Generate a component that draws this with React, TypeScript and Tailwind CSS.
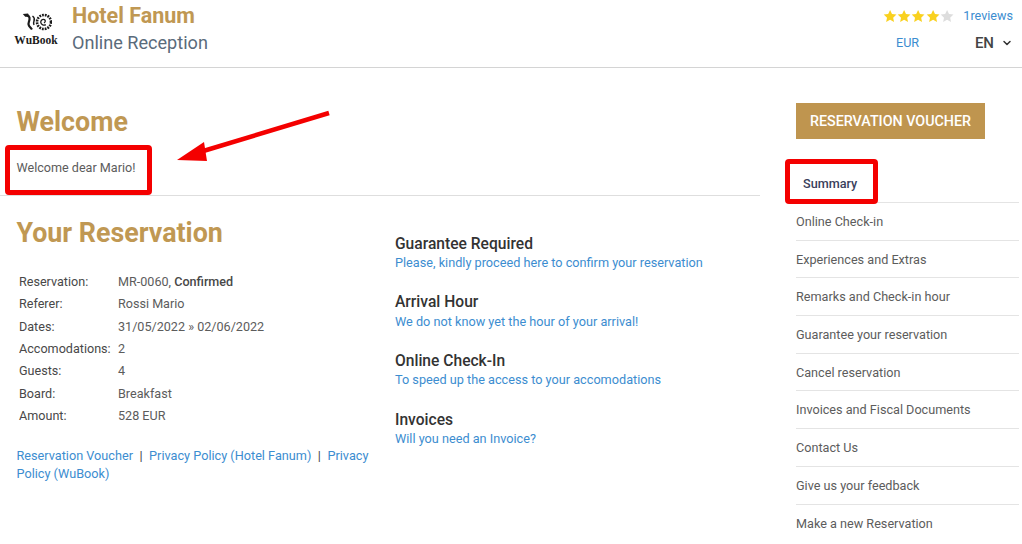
import { ChevronDown } from "lucide-react";

const details = [
  ["Reservation:", "MR-0060, "],
  ["Referer:", "Rossi Mario"],
  ["Dates:", "31/05/2022 » 02/06/2022"],
  ["Accomodations:", "2"],
  ["Guests:", "4"],
  ["Board:", "Breakfast"],
  ["Amount:", "528 EUR"],
];

const notices = [
  ["Guarantee Required", "Please, kindly proceed here to confirm your reservation"],
  ["Arrival Hour", "We do not know yet the hour of your arrival!"],
  ["Online Check-In", "To speed up the access to your accomodations"],
  ["Invoices", "Will you need an Invoice?"],
];

const menu = [
  "Online Check-in",
  "Experiences and Extras",
  "Remarks and Check-in hour",
  "Guarantee your reservation",
  "Cancel reservation",
  "Invoices and Fiscal Documents",
  "Contact Us",
  "Give us your feedback",
  "Make a new Reservation",
];

function Star({ color }: { color: string }) {
  return (
    <svg viewBox="0 0 24 24" className="w-[14.200px] h-[14.200px]" fill={color}>
      <path d="M12 1.500l3.200 7 7.600.9-5.600 5.200 1.500 7.500L12 18.300l-6.700 3.800 1.500-7.500L1.200 9.400l7.600-.9z" />
    </svg>
  );
}

function Logo() {
  return (
    <div className="w-[72px] flex flex-col items-center pt-[13px]">
      <svg viewBox="0 0 30 18" className="w-[30px] h-[18px] ml-[1px]">
        <g fill="none" stroke="#1b1b1b">
          <circle cx="22" cy="9" r="7" strokeWidth="2.600" strokeDasharray="1.800 1" />
          <path d="M22 10c1.200-.8 2-2.400.4-3.400-2-1-4 .8-3.600 3 .4 2 3 3.200 5 2" strokeWidth="1.300" />
          <path d="M3 2.500c3.500 0 5 1.200 4.500 4-.4 2.500-1.500 3.500-.8 5.500.5 1.800 2 2.500 3.300 4.500" strokeWidth="2.200" />
          <path d="M10.500 3c2 1.500 2.300 3 1.500 5-.6 1.600-.8 2.600 0 4" strokeWidth="1.500" />
        </g>
        <path d="M.8 1l5.200-.6 1.500 2.600-4.500.4z" fill="#1b1b1b" />
      </svg>
      <div className="font-['Liberation_Serif',serif] font-bold text-[11.500px] leading-[13px] mt-[3px] text-[#1b1b1b]">
        WuBook
      </div>
    </div>
  );
}

export default function App() {
  return (
    <div className="relative w-[1022px] h-[544px] overflow-hidden bg-white font-['Roboto',sans-serif] text-[12.600px] text-[#5c5c5c]">
      <header className="h-[68px] border-b border-[#d4d4d4] flex">
        <Logo />
        <div className="flex-1 pt-[1px]">
          <div className="text-[21.500px] leading-[30px] font-bold text-[#c09853]">Hotel Fanum</div>
          <div className="text-[18.100px] leading-[26px] mt-[-1px] text-[#5a6b7b]">Online Reception</div>
        </div>
        <div className="w-[140px] pt-[6px] pr-[9px]">
          <div className="flex items-center h-[20px]">
            <div className="flex ml-[1px]">
              <Star color="#f9d11f" />
              <Star color="#f9d11f" />
              <Star color="#f9d11f" />
              <Star color="#f9d11f" />
              <Star color="#dddddd" />
            </div>
            <a className="ml-auto text-[12.600px] text-[#3c8dd0]">1reviews</a>
          </div>
          <div className="flex items-center mt-[6px] h-[22px]">
            <a className="ml-[14px] text-[12.600px] text-[#3c8dd0]">EUR</a>
            <span className="ml-auto text-[15px] font-medium text-[#444]">EN</span>
            <ChevronDown className="ml-[7px] w-[12px] h-[12px] text-[#333]" strokeWidth={3} />
          </div>
        </div>
      </header>

      <div className="flex">
        <main className="w-[760px]">
          <section className="h-[128px] border-b border-[#dedede] pl-[16.500px] pt-[37px]">
            <h1 className="text-[26.800px] leading-[34px] font-bold text-[#c09853]">Welcome</h1>
            <p className="mt-[20px] leading-[18px]">Welcome dear Mario!</p>
          </section>
          <section className="pl-[16.500px] pt-[20px] flex">
            <div className="w-[378.500px]">
              <h2 className="text-[26.800px] leading-[34px] font-bold text-[#c09853]">Your Reservation</h2>
              <div className="mt-[21px] ml-[2.500px]">
                {details.map(([label, value]) => (
                  <div key={label} className="flex h-[22.400px] items-center">
                    <span className="w-[99px] text-[#484848]">{label}</span>
                    <span>
                      {value}
                      {label === "Reservation:" && <b className="font-medium text-[#484848]">Confirmed</b>}
                    </span>
                  </div>
                ))}
              </div>
              <div className="mt-[19px] w-[362px] leading-[18px] text-[12.700px] text-[#3c8dd0]">
                <a>Reservation Voucher</a>
                <span className="text-[#444] px-[6.500px]">|</span>
                <a>Privacy Policy (Hotel Fanum)</a>
                <span className="text-[#444] px-[6.500px]">|</span>
                <a>Privacy Policy (WuBook)</a>
              </div>
            </div>
            <div className="pt-[18.500px] flex flex-col gap-[20.700px] text-[12.700px]">
              {notices.map(([title, text]) => (
                <div key={title}>
                  <h3 className="text-[15.600px] leading-[19.500px] font-medium text-[#333]">{title}</h3>
                  <a className="block leading-[18.500px] text-[#3c8dd0]">{text}</a>
                </div>
              ))}
            </div>
          </section>
        </main>

        <aside className="flex-1 pl-[36px] pr-[3px] pt-[35px]">
          <button className="w-[189px] h-[36px] pt-[1px] bg-[#bf954f] text-white text-[14.300px] font-medium">
            RESERVATION VOUCHER
          </button>
          <nav className="mt-[26px] text-[12.650px]">
            <div className="h-[38px] pl-[7px] leading-[37px] font-medium text-[#3a3f5c] border-b border-[#e4e4e4]">Summary</div>
            {menu.map((item, i) => (
              <div
                key={item}
                className={`h-[37.700px] leading-[37px] ${i < menu.length - 1 ? "border-b border-[#e4e4e4]" : ""}`}
              >
                {item}
              </div>
            ))}
          </nav>
        </aside>
      </div>

      {/* red annotations added on top of the page */}
      <div className="absolute left-[5px] top-[145px] w-[147px] h-[50px] border-[5px] border-[#f40000] rounded-[4px]" />
      <div className="absolute left-[785px] top-[159px] w-[93px] h-[45px] border-[5px] border-[#f40000] rounded-[4px]" />
      <svg className="absolute left-0 top-0 pointer-events-none" width="1022" height="544">
        <line x1="329" y1="113" x2="200" y2="152" stroke="#f40000" strokeWidth="4.500" />
        <polygon points="177,160 204,142 207,161" fill="#f40000" />
      </svg>
    </div>
  );
}
